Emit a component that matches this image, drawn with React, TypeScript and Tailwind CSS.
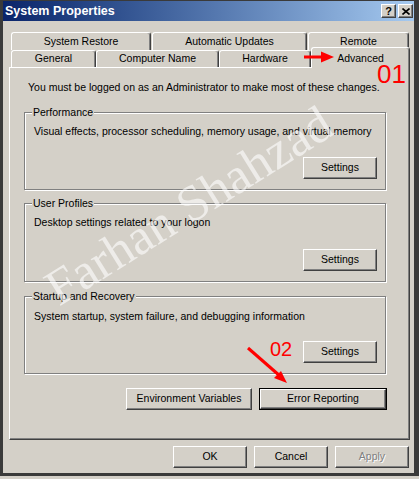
const raised =
  "bg-[#d4d0c8] border border-t-white border-l-white border-r-[#404040] border-b-[#404040] shadow-[inset_-1px_-1px_0_#808080]";

const Button = ({
  label,
  className = "",
  disabled = false,
  isDefault = false,
}: {
  label: string;
  className?: string;
  disabled?: boolean;
  isDefault?: boolean;
}) => {
  if (isDefault) {
    return (
      <div className={`h-[22px] border border-black ${className}`}>
        <div className={`${raised} h-full flex items-center justify-center`}>
          {label}
        </div>
      </div>
    );
  }
  return (
    <div
      className={`${raised} h-[22px] flex items-center justify-center ${className} ${
        disabled ? "text-[#808080] [text-shadow:1px_1px_0_#fff]" : ""
      }`}
    >
      {label}
    </div>
  );
};

const Tab = ({ label, className = "" }: { label: string; className?: string }) => (
  <div
    className={`bg-[#d4d0c8] border-l border-t border-l-white border-t-white border-r border-r-[#404040] rounded-t-[3px] shadow-[inset_-1px_0_0_#808080] flex items-center justify-center ${className}`}
  >
    {label}
  </div>
);

const Group = ({
  title,
  text,
  className = "",
}: {
  title: string;
  text: string;
  className?: string;
}) => (
  <div
    className={`relative ml-[14px] w-[362px] border border-[#808080] shadow-[inset_1px_1px_0_#fff,1px_1px_0_#fff] pt-[12px] pl-[9px] pr-[8px] pb-[10px] flex flex-col justify-between ${className}`}
  >
    <span className="absolute -top-[7px] left-[7px] px-[1px] bg-[#d4d0c8] leading-[13px]">
      {title}
    </span>
    <div className="leading-[13px] whitespace-nowrap">{text}</div>
    <Button label="Settings" className="w-[74px] self-end" />
  </div>
);

export default function App() {
  return (
    <div className="relative w-[419px] h-[479px] bg-[#d4d0c8] overflow-hidden font-['Liberation_Sans',Arial,sans-serif] text-[10.5px] text-black">
      <div className="h-[476px] border-[#3a3a3a] border-t-[1px] border-l-[3px] border-r-[5px] border-b-[3px] flex flex-col">
        {/* title bar */}
        <div className="h-[20px] bg-gradient-to-r from-[#0a246a] to-[#a6caf0] flex items-center justify-between pl-[2px] pr-[1px]">
          <span className="text-white font-bold text-[12.5px]">System Properties</span>
          <div className="flex gap-[2px]">
            <div className={`${raised} w-[15px] h-[14px] flex items-center justify-center font-bold text-[11px] leading-none`}>
              ?
            </div>
            <div className={`${raised} w-[15px] h-[14px] flex items-center justify-center`}>
              <svg width="8" height="7" viewBox="0 0 8 7">
                <path d="M0.5 0.5L7.5 6.5M7.5 0.5L0.5 6.5" stroke="black" strokeWidth="1.6" />
              </svg>
            </div>
          </div>
        </div>

        <div className="pt-[11px] pl-[6px] pr-[4px]">
          {/* tab rows */}
          <div className="flex h-[18px] pl-[2px]">
            <Tab label="System Restore" className="w-[140px] h-[18px]" />
            <Tab label="Automatic Updates" className="w-[155px] h-[18px] ml-[1px]" />
            <Tab label="Remote" className="w-[101px] h-[18px] ml-[1px]" />
          </div>
          <div className="flex h-[17px] pl-[2px] items-start">
            <Tab label="General" className="w-[85px] h-[17px]" />
            <Tab label="Computer Name" className="w-[123px] h-[17px]" />
            <Tab label="Hardware" className="w-[92px] h-[17px]" />
            <Tab
              label="Advanced"
              className="w-[99px] h-[21px] -mt-[3px] -mb-[1px] relative z-10 !items-start pt-[3px]"
            />
          </div>

          {/* tab panel */}
          <div className={`${raised} w-[401px] h-[373px] flex flex-col`}>
            <div className="mt-[13px] ml-[18px] leading-[13px] whitespace-nowrap">
              You must be logged on as an Administrator to make most of these changes.
            </div>
            <Group
              title="Performance"
              text="Visual effects, processor scheduling, memory usage, and virtual memory"
              className="mt-[18px] h-[78px]"
            />
            <Group
              title="User Profiles"
              text="Desktop settings related to your logon"
              className="mt-[13px] h-[79px]"
            />
            <Group
              title="Startup and Recovery"
              text="System startup, system failure, and debugging information"
              className="mt-[14px] h-[78px] !pt-[13px]"
            />
            <div className="mt-[14px] ml-[14px] w-[363px] flex justify-end gap-[7px]">
              <Button label="Environment Variables" className="w-[126px]" />
              <Button label="Error Reporting" className="w-[128px]" isDefault />
            </div>
          </div>

          <div className="mt-[6px] flex justify-end gap-[7px] pr-[1px]">
            <Button label="OK" className="w-[74px]" />
            <Button label="Cancel" className="w-[74px]" />
            <Button label="Apply" className="w-[74px]" disabled />
          </div>
        </div>
      </div>

      {/* watermark */}
      <div className="absolute z-20 left-[189px] top-[206px] -translate-x-1/2 -translate-y-1/2 rotate-[-32deg] whitespace-nowrap pointer-events-none font-['Liberation_Serif',serif] text-[51px] text-white/60 leading-none">
        Farhan Shahzad
      </div>

      {/* annotations */}
      <svg className="absolute z-30 left-0 top-0 pointer-events-none" width="419" height="479">
        <line x1="304" y1="57" x2="324" y2="57" stroke="#ff0000" strokeWidth="3" />
        <polygon points="334,57 321,51.5 321,62.5" fill="#ff0000" />
        <line x1="248" y1="348" x2="280" y2="376" stroke="#ff0000" strokeWidth="3" />
        <polygon points="287,383 274,378 281,371" fill="#ff0000" />
      </svg>
      <div className="absolute z-30 left-[377px] top-[61px] text-[26px] leading-none text-[#ff0000]">01</div>
      <div className="absolute z-30 left-[270px] top-[339px] text-[20px] leading-none text-[#ff0000]">02</div>
    </div>
  );
}
